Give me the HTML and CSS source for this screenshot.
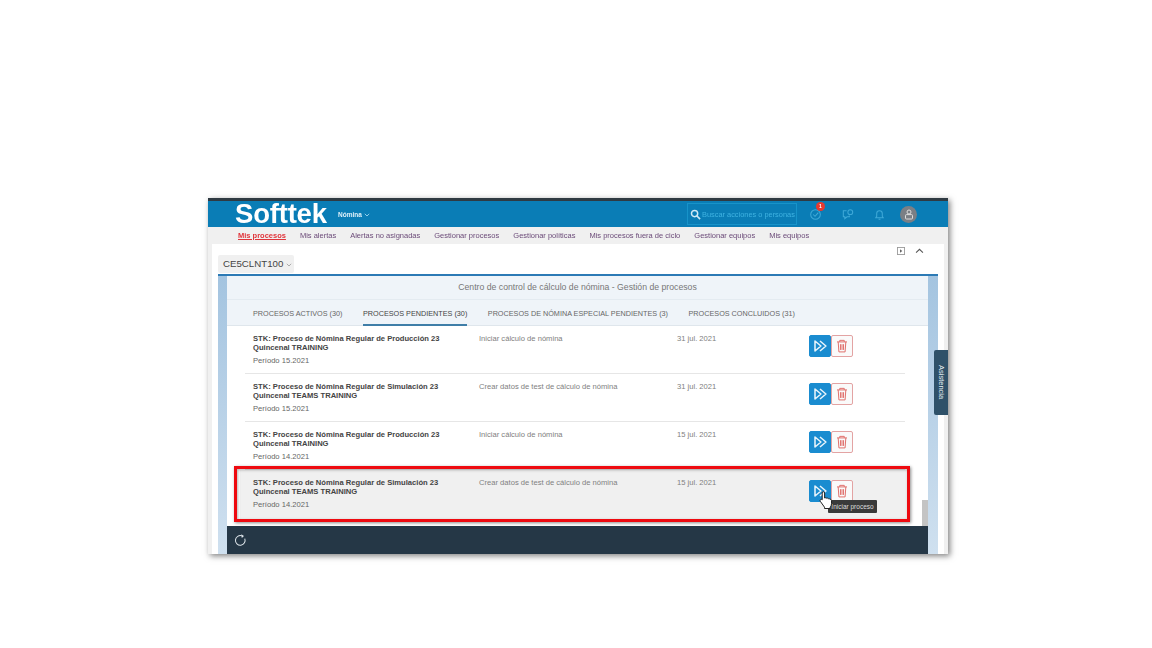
FILE: index.html
```html
<!DOCTYPE html>
<html lang="es">
<head>
<meta charset="utf-8">
<title>Softtek - Gestión de procesos</title>
<link rel="stylesheet" href="styles.css">
</head>
<body>
<svg class="defs" width="0" height="0" aria-hidden="true">
  <symbol id="play" viewBox="0 0 22 22"><path d="M5.500 5.500v11l6.500-5.500z M11 5.500l6.500 5.500-6.500 5.500" fill="none" stroke="#e8f4fb" stroke-width="1.700" stroke-linejoin="round"/></symbol>
  <symbol id="trash" viewBox="0 0 22 22"><path d="M5.500 6.500h11M8.500 6.500V4.800h5v1.700M6.800 6.500l.8 11h6.800l.8-11M9.300 9v6.300M11 9v6.300M12.700 9v6.300" fill="none" stroke="#e0716d" stroke-width="1.100"/></symbol>
</svg>
<div class="stage">
  <div class="window">
    <header class="shell">
      <div class="logo">Softtek</div>
      <div class="app">Nómina <svg width="6" height="4" viewBox="0 0 6 4"><path d="M.8.8L3 3l2.200-2.200" fill="none" stroke="#9fd6ef" stroke-width=".9"/></svg></div>
      <div class="search">
        <svg class="search-ic" width="11" height="11" viewBox="0 0 12 12"><circle cx="5" cy="5" r="3.400" fill="none" stroke="#cfeaf7" stroke-width="1.600"/><path d="M7.600 7.600l3.400 3.400" stroke="#cfeaf7" stroke-width="1.800"/></svg>
        <span>Buscar acciones o personas</span>
      </div>
      <div class="shell-icons">
        <span class="ic">
          <svg width="13" height="13" viewBox="0 0 14 14"><circle cx="7" cy="7" r="5.200" fill="none" stroke="#3fa9d8" stroke-width="1.100"/><path d="M4.500 7l2 2 3.500-4" fill="none" stroke="#3fa9d8" stroke-width="1.100"/></svg>
          <b class="badge">1</b>
        </span>
        <span class="ic">
          <svg width="13" height="13" viewBox="0 0 14 14"><path d="M6 3H2.500v6.500h1.600v2l2.400-2H9V8" fill="none" stroke="#3fa9d8" stroke-width="1.100"/><circle cx="10" cy="4.500" r="2.600" fill="none" stroke="#3fa9d8" stroke-width="1.100"/></svg>
        </span>
        <span class="ic">
          <svg width="13" height="13" viewBox="0 0 14 14"><path d="M3 10.500h8l-1-1.500V6a3 3 0 0 0-6 0v3zM6 12h2" fill="none" stroke="#3fa9d8" stroke-width="1.100"/></svg>
        </span>
        <span class="avatar">
          <svg width="10" height="11" viewBox="0 0 10 11"><circle cx="5" cy="3" r="2" fill="none" stroke="#ddd" stroke-width="1"/><rect x="1.500" y="5.600" width="7" height="4.400" rx="1" fill="none" stroke="#ddd" stroke-width="1"/></svg>
        </span>
      </div>
    </header>

    <nav class="topnav">
      <a class="active">Mis procesos</a>
      <a>Mis alertas</a>
      <a>Alertas no asignadas</a>
      <a>Gestionar procesos</a>
      <a>Gestionar políticas</a>
      <a>Mis procesos fuera de ciclo</a>
      <a>Gestionar equipos</a>
      <a>Mis equipos</a>
    </nav>

    <main class="content">
      <div class="toolbar">
        <div class="client">CE5CLNT100 <svg width="6" height="4" viewBox="0 0 6 4"><path d="M.8.8L3 3l2.200-2.200" fill="none" stroke="#999" stroke-width=".8"/></svg></div>
        <div class="tools">
          <svg width="8" height="8" viewBox="0 0 9 9"><rect x=".5" y=".5" width="8" height="8" fill="none" stroke="#999"/><path d="M3.400 2.600v3.800L6 4.500z" fill="#666"/></svg>
          <svg width="9" height="6" viewBox="0 0 10 7"><path d="M1 5.500l4-4 4 4" fill="none" stroke="#555" stroke-width="1.200"/></svg>
        </div>
      </div>

      <section class="panel">
        <div class="panel-inner">
          <div class="panel-title">Centro de control de cálculo de nómina - Gestión de procesos</div>
          <div class="tabs">
            <span class="tab">PROCESOS ACTIVOS (30)</span>
            <span class="tab selected">PROCESOS PENDIENTES (30)</span>
            <span class="tab">PROCESOS DE NÓMINA ESPECIAL PENDIENTES (3)</span>
            <span class="tab">PROCESOS CONCLUIDOS (31)</span>
          </div>
          <div class="list">
            <div class="row">
              <div class="col-name"><strong>STK: Proceso de Nómina Regular de Producción 23 Quincenal TRAINING</strong><span>Período 15.2021</span></div>
              <div class="col-step">Iniciar cálculo de nómina</div>
              <div class="col-date">31 jul. 2021</div>
              <div class="actions"><button class="btn-go"><svg width="20" height="20"><use href="#play"/></svg></button><button class="btn-del"><svg width="20" height="20"><use href="#trash"/></svg></button></div>
            </div>
            <div class="row">
              <div class="col-name"><strong>STK: Proceso de Nómina Regular de Simulación 23 Quincenal TEAMS TRAINING</strong><span>Período 15.2021</span></div>
              <div class="col-step">Crear datos de test de cálculo de nómina</div>
              <div class="col-date">31 jul. 2021</div>
              <div class="actions"><button class="btn-go"><svg width="20" height="20"><use href="#play"/></svg></button><button class="btn-del"><svg width="20" height="20"><use href="#trash"/></svg></button></div>
            </div>
            <div class="row">
              <div class="col-name"><strong>STK: Proceso de Nómina Regular de Producción 23 Quincenal TRAINING</strong><span>Período 14.2021</span></div>
              <div class="col-step">Iniciar cálculo de nómina</div>
              <div class="col-date">15 jul. 2021</div>
              <div class="actions"><button class="btn-go"><svg width="20" height="20"><use href="#play"/></svg></button><button class="btn-del"><svg width="20" height="20"><use href="#trash"/></svg></button></div>
            </div>
            <div class="row row-hot">
              <div class="col-name"><strong>STK: Proceso de Nómina Regular de Simulación 23 Quincenal TEAMS TRAINING</strong><span>Período 14.2021</span></div>
              <div class="col-step">Crear datos de test de cálculo de nómina</div>
              <div class="col-date">15 jul. 2021</div>
              <div class="actions"><button class="btn-go"><svg width="20" height="20"><use href="#play"/></svg></button><button class="btn-del"><svg width="20" height="20"><use href="#trash"/></svg></button></div>
            </div>
            <div class="scroll-thumb"></div>
            <div class="highlight"></div>
            <div class="tooltip">Iniciar proceso</div>
            <svg class="cursor" width="15" height="20" viewBox="0 0 15 20"><path d="M4.200 1.600c.9 0 1.400.6 1.400 1.400v5l.6-.2c.6-.2 1.200 0 1.500.4.6-.3 1.300-.1 1.600.5.7-.3 1.400 0 1.700.6.7-.2 1.500.3 1.500 1.100v3.300c0 1.700-.6 2.800-1.400 3.800v1H5.500v-1.300L1.500 11.600c-.6-.7-.5-1.500 0-2 .6-.5 1.200-.3 1.700.2V3c0-.8.2-1.400 1-1.400z" fill="#fff" stroke="#222" stroke-width="1"/></svg>
          </div>
          <footer class="panel-foot">
            <svg width="13" height="13" viewBox="0 0 14 14"><path d="M11.600 5A5.200 5.200 0 1 1 8.500 2" fill="none" stroke="#dfe6eb" stroke-width="1.100"/><path d="M7.800 .4l3 1.800-2.400 2.200z" fill="#dfe6eb"/></svg>
          </footer>
        </div>
      </section>
      <div class="assist"><span>Asistencia</span></div>
    </main>
  </div>
</div>
</body>
</html>
```

FILE: styles.css
```css
* { box-sizing: border-box; }
html, body { margin: 0; height: 100%; background: #fff; overflow: hidden; }
body { font-family: "Liberation Sans", Arial, sans-serif; color: #555; }
.defs { position: absolute; }

.stage { padding: 198px 204px 0 208px; }
.window {
  width: 740px;
  height: 356px;
  display: flex;
  flex-direction: column;
  border-top: 3px solid #2f3a42;
  background: #f0f0f0;
  box-shadow: 2px 2px 6px rgba(0,0,0,.5);
  filter: blur(.55px);
}

.shell { height: 26px; flex: none; background: #0a7db6; display: flex; align-items: center; padding-left: 27px; }
.logo { font-weight: 700; font-size: 27.500px; line-height: 26px; color: #fff; letter-spacing: -.2px; width: 103px; }
.app { font-size: 6.500px; font-weight: 700; color: #dff1fa; width: 349px; }
.search { width: 110px; height: 22px; border: 1px solid #1793c9; display: flex; align-items: center; gap: 1px; padding-left: 2px; font-size: 7.400px; white-space: nowrap; overflow: hidden; }
.search-ic { flex: none; }
.search span { color: #3fb3e2; }
.shell-icons { display: flex; align-items: center; margin-left: 12px; gap: 19px; }
.ic { position: relative; display: flex; width: 13px; height: 13px; }
.badge { position: absolute; left: 7px; top: -6px; width: 9px; height: 9px; border-radius: 50%; background: #e8392f; color: #fff; font-size: 5px; line-height: 9px; text-align: center; }
.avatar { width: 17px; height: 17px; margin-left: -5px; border-radius: 50%; background: #7b7f85; display: flex; align-items: center; justify-content: center; }

.topnav { height: 17px; flex: none; display: flex; align-items: center; padding-left: 30px; gap: 14px; font-size: 7.500px; color: #6b4a78; white-space: nowrap; }
.topnav a.active { color: #e0343a; font-weight: 700; text-decoration: underline; }

.content { position: relative; flex: 1; min-height: 0; margin: 0 4px; background: #fff; display: flex; flex-direction: column; }
.toolbar { height: 30px; flex: none; display: flex; justify-content: space-between; padding: 0 20px 0 6px; align-items: flex-start; }
.client { margin-top: 11px; width: 76px; height: 18px; background: #f0f0f0; border-radius: 2px; font-size: 9.700px; line-height: 18px; padding-left: 5px; color: #444; white-space: nowrap; }
.tools { display: flex; align-items: center; gap: 10px; padding-top: 3px; }

.panel { flex: 1; min-height: 0; margin: 0 6px; border-top: 2px solid #2c7ab5; padding: 0 10px 0 9px; background: linear-gradient(#a4c4e0, #cfe0ef); display: flex; }
.panel-inner { flex: 1; min-width: 0; background: #fff; display: flex; flex-direction: column; }
.panel-title { height: 24px; flex: none; background: #eff4f9; border-bottom: 1px solid #e4ebf1; font-size: 8.700px; line-height: 22px; text-align: center; color: #777; }
.tabs { height: 26px; flex: none; background: #eff4f9; border-bottom: 1px solid #dfe6ec; display: flex; padding-left: 26px; gap: 20.500px; font-size: 7.250px; color: #666; white-space: nowrap; }
.tab { line-height: 28px; height: 26px; }
.tab.selected { color: #444; border-bottom: 2px solid #3f7ea8; }

.list { position: relative; flex: 1; min-height: 0; padding: 0 23px 0 18px; }
.row { height: 48px; position: relative; border-bottom: 1px solid #e6e6e6; display: flex; padding: 8px 0 0 8px; font-size: 7.600px; color: #808080; }
.row-hot { background: #f0f0f0; border-bottom: 0; height: 52px; margin: 0 -5px -6px -5px; padding-left: 13px; padding-right: 5px; }
.col-name { width: 226px; flex: none; padding-right: 20px; display: flex; flex-direction: column; }
.col-name strong { font-weight: 700; font-size: 7.600px; line-height: 9px; color: #444; }
.col-name span { margin-top: 4px; font-size: 7.600px; line-height: 10px; color: #666; }
.col-step { width: 198px; flex: none; }
.col-date { width: 132px; flex: none; }
.actions { display: flex; margin-top: 1px; height: 22px; }
.row-hot .actions { margin-top: 2px; }
.btn-go, .btn-del { width: 22px; height: 22px; padding: 0; display: flex; align-items: center; justify-content: center; border-radius: 2px; }
.btn-go { background: #1a8cd0; border: 1px solid #1a8cd0; }
.btn-del { background: #fafafa; border: 1px solid #e3a3a3; }

.scroll-thumb { position: absolute; right: 0; top: 174px; width: 6px; height: 26px; background: #c4c4c4; }
.highlight { position: absolute; left: 7px; top: 140px; width: 676px; height: 56px; border: 3px solid #ee0a10; box-shadow: 1px 1px 3px rgba(0,0,0,.45), inset 1px 1px 3px rgba(0,0,0,.3); }
.tooltip { position: absolute; left: 601px; top: 174px; width: 49px; height: 13px; background: #3a3a3a; color: #ddd; border-radius: 1px; font-size: 6.500px; line-height: 13px; text-align: center; white-space: nowrap; }
.cursor { position: absolute; left: 592px; top: 164px; }

.panel-foot { height: 28px; flex: none; background: #253746; display: flex; align-items: center; padding-left: 7px; }

.assist { position: absolute; right: -4px; top: 106px; width: 14px; height: 65px; background: #2f5169; border-radius: 2px 0 0 2px; display: flex; align-items: center; justify-content: center; }
.assist span { writing-mode: vertical-rl; font-size: 7.500px; color: #e6edf2; }
```
